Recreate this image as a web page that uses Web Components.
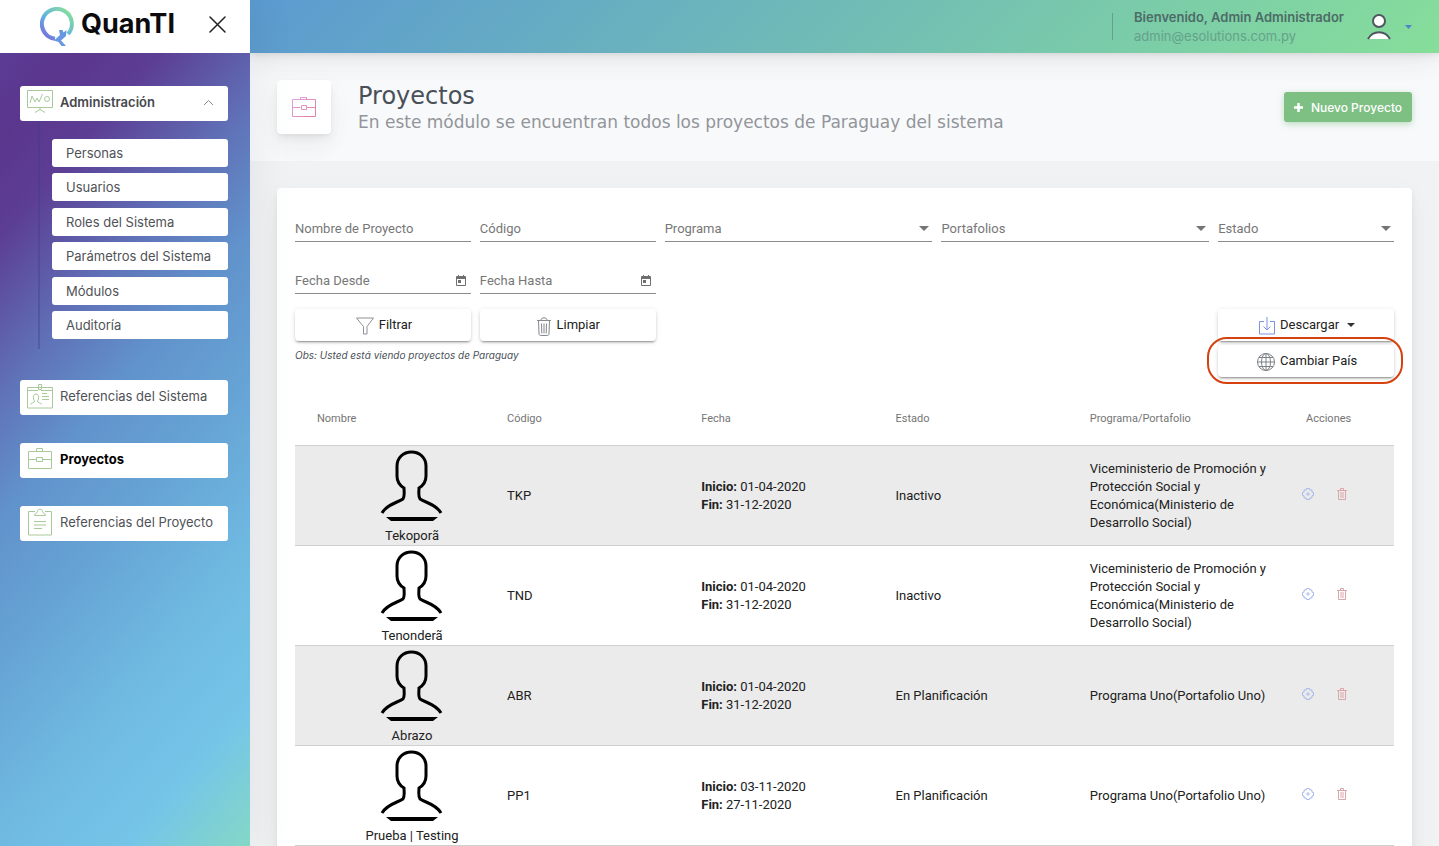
<!DOCTYPE html>
<html lang="es">
<head>
<meta charset="utf-8">
<meta name="viewport" content="width=device-width, initial-scale=1">
<title>QuanTI - Proyectos</title>
<style>
  html, body { margin: 0; height: 100%; }
  body { font-family: Inter, "Open Sans", sans-serif; font-size: 13px; color: #495057; background: #f1f2f4; overflow: hidden; }
</style>
</head>
<body>
<quanti-app></quanti-app>

<script>
const ICONS = {
  board: `<svg viewBox="0 0 26 24" width="26" height="24" fill="none" stroke="#a9c99a"><path d="M.5.5h25v17H.5zM13 18v2M8 22.500l5-3 5 3"/><path d="M3 13l2-7 3 6 2-4 2 4 3.500-8"/><circle cx="20" cy="9" r="2.500"/></svg>`,
  card: `<svg viewBox="0 0 26 25" width="26" height="25" fill="none" stroke="#a9c99a"><path d="M.5 3.500h25v20.500H.5zM.5 6.500h10.500M14 6.500h11.500M11.500.5h3v5h-3z"/><path d="M3.500 20.500c0-2 4-1 4-3.500-1.500-2-2-7 1.500-7s3 5 1.500 7c0 2.500 4 1.500 4 3.500M15 9.500h5M15 12.500h7M15 15.500h7"/></svg>`,
  case: `<svg viewBox="0 0 24 22" width="24" height="22" fill="none" stroke="#a9c99a"><path d="M.5 3.500h23v17H.5zM8.500 3.500v-3h6v3M.5 11.500h8M14.500 11.500h9M8.500 9.500h6v4h-6z"/></svg>`,
  clip: `<svg viewBox="0 0 24 28" width="24" height="28" fill="none" stroke="#a9c99a"><path d="M7 3.500H.5v23.500h23V3.500H17"/><path d="M6.500 7.500c0-3 2.500-1.500 3-4C9.500.5 14.500.5 14.500 3.500c.5 2.500 3 1 3 4zM6 13.500h12M6 17h12M6 20.500h8"/></svg>`,
  casePink: `<svg viewBox="0 0 24 22" width="24" height="22" fill="none" stroke="url(#g)"><defs><linearGradient id="g" x1="0" y1="0" x2="24" y2="22" gradientUnits="userSpaceOnUse"><stop stop-color="#dca2e8"/><stop offset="1" stop-color="#e47f95"/></linearGradient></defs><path d="M.5 3.500h23v17H.5zM8.500 3.500v-2h6v2M.5 11.500h8M14.500 11.500h9M9.500 9.500h5v4h-5z"/></svg>`,
  funnel: `<svg viewBox="0 0 18 18" width="18" height="18" fill="none" stroke="#8d9095"><path d="M.5 1h17l-6.500 8.500V17H7.500V9.500z"/></svg>`,
  trash: `<svg viewBox="0 0 14 19" width="14" height="19" fill="none" stroke="#85888c"><path d="M0 3.500h14M1.500 4l.5 13c0 1 1 1.500 2 1.500h6c1 0 2-.5 2-1.500l.5-13M4 3c0-3 6-3 6 0M4.500 6.500l.3 10M7 6.500v10M9.500 6.500l-.3 10"/></svg>`,
  download: `<svg viewBox="0 0 16 18" width="16" height="18" fill="none" stroke="#7b93e3"><path d="M5 4.500H.5V17h15V4.500H11M8 0v13M4.500 9.500L8 13l3.500-3.500"/></svg>`,
  globe: `<svg viewBox="0 0 18 18" width="18" height="18" fill="none" stroke="#7d8186"><circle cx="9" cy="9" r="8.500"/><ellipse cx="9" cy="9" rx="4.500" ry="8.500"/><path d="M9 .5v17M.5 9h17M2 4.500h14M2 13.500h14"/></svg>`,
  gear: `<svg viewBox="0 0 12 12" width="12" height="12" fill="none" stroke="#a9b9ea"><path d="M4.500.5h3l.3 1.500 2.200 0 0 2.200 1.500.3v3l-1.500.3 0 2.200-2.200 0-.3 1.500h-3l-.3-1.500-2.200 0 0-2.200-1.500-.3v-3l1.500-.3 0-2.200 2.200 0z"/><circle cx="6" cy="6" r="1.200"/></svg>`,
  bin: `<svg viewBox="0 0 10 12" width="10" height="12" fill="none" stroke="#dba5ac"><path d="M0 2.500h10M1.500 3v8.500h7V3M3.500 2V.5h3V2M4 4v6M6 4v6"/></svg>`,
  calendar: `<svg viewBox="0 0 10 12" width="10" height="12" fill="#6f6f6f" fill-rule="evenodd"><path d="M2 0h1v1h4V0h1v1h1a1 1 0 0 1 1 1v8a1 1 0 0 1-1 1H1a1 1 0 0 1-1-1V2a1 1 0 0 1 1-1h1zM1 4v6h8V4zM2 5h3v3H2z"/></svg>`,
  person: `<svg viewBox="0 0 64 72" width="64" height="72" fill="none" stroke="#000" stroke-width="3"><path d="M2 63C7 54 17 53 23 49c2-3 1-7 1-11-5-3-7-7-7-12V16C17 8 23 2 31.500 2S46 8 46 16v10c0 5-2 9-7 12 0 4-1 8 1 11 6 4 16 5 21 14"/><path fill="#000" stroke="none" d="M6 67h52l-5 4H11z"/></svg>`
};

/* Base class: clones the element's own template into an open shadow root. */
class View extends HTMLElement {
  constructor() {
    super();
    const t = document.createElement('template');
    t.innerHTML = `<style>*{box-sizing:border-box}button,input,select{font:inherit;color:inherit}svg{display:block;flex:none}</style>` + this.view();
    this.attachShadow({ mode: 'open' }).append(t.content.cloneNode(true));
  }
}

customElements.define('ui-icon', class extends HTMLElement {
  connectedCallback() {
    if (this.shadowRoot) return;
    this.attachShadow({ mode: 'open' }).innerHTML =
      `<style>:host{display:inline-flex;align-items:center;justify-content:center;flex:none}svg{display:block}</style>${ICONS[this.getAttribute('name')]}`;
  }
});

customElements.define('brand-bar', class extends View {
  view() { return `<style>
    :host{display:flex;align-items:center;height:53px;padding:0 24px 0 40px;background:#fff}
    a{display:flex;align-items:center;gap:7px;color:#0b0b0d;text-decoration:none;font-size:27px;line-height:32px;font-weight:700;flex:1}
    a span{padding-bottom:5px}
    button{border:0;background:none;padding:0 0 4px;cursor:pointer}
  </style>
  <a href="#"><svg viewBox="0 0 34 40" width="34" height="40" fill="none"><defs><linearGradient id="q" x1="4" y1="34" x2="30" y2="6" gradientUnits="userSpaceOnUse"><stop stop-color="#7a63dc"/><stop offset=".5" stop-color="#62b5de"/><stop offset="1" stop-color="#84dc9f"/></linearGradient></defs>
  <path stroke="url(#q)" stroke-width="4" d="M15 31.800A15 15 0 1 1 28 27"/><path fill="#6797e2" d="M14 33.500L20 28l-1-5h3.500l1 2.500 3-2.500-.5 6-5 4.500 5 5.500h-4.500l-3-4z"/></svg><span>QuanTI</span></a>
  <button aria-label="Cerrar menú"><svg width="17" height="17" viewBox="0 0 17 17" stroke="#222" stroke-width="1.500" stroke-linecap="round"><path d="M1 1l15 15M16 1L1 16"/></svg></button>`; }
});

customElements.define('side-link', class extends View {
  static observedAttributes = ['icon'];
  view() { return `<style>
    :host{display:block}
    a{display:flex;align-items:center;height:35px;padding:0 14px 3px 6px;gap:7px;border-radius:3px;background:#fff;color:#4f5256;text-decoration:none;line-height:18px}
    .i{width:27px;display:flex;justify-content:center}
    .t{flex:1;white-space:nowrap}
    :host([open]) a{font-weight:600;color:#45484d}
    :host([current]) a{font-weight:700;color:#000}
    .c{display:none;fill:none;stroke:#888}
    :host([open]) .c{display:block}
    :host([sub]) a{height:28px;padding:0 14px}
    :host([sub]) .i{display:none}
  </style><a href="#"><span class="i"></span><span class="t"><slot></slot></span><svg class="c" width="11" height="7" viewBox="0 0 11 7"><path d="M1 6l4.500-4.500L10 6"/></svg></a>`; }
  attributeChangedCallback(n, o, v) { this.shadowRoot.querySelector('.i').innerHTML = ICONS[v]; }
});

customElements.define('side-menu', class extends View {
  view() { return `<style>
    :host{display:flex;flex-direction:column;width:250px;flex:none;box-shadow:7px 0 40px rgba(8,10,37,.06);z-index:2}
    nav{flex:1;padding:33px 22px 0 20px;display:flex;flex-direction:column;gap:28px;
      background:linear-gradient(131deg,#5b3c96 0,#5b368d 8%,#5c3e94 17%,#6073b8 32%,#6192cb 43%,#66a4d5 57%,#6fb9e1 72%,#75c5e8 87%,#84d8c6 100%)}
    .sub{margin:0 0 3px 18px;height:228px;border-left:2px solid rgba(60,60,130,.35);padding:18px 0 10px 12px;display:flex;flex-direction:column;justify-content:space-between}
  </style>
  <brand-bar></brand-bar>
  <nav aria-label="Principal">
    <div><side-link icon="board" open>Administración</side-link>
      <div class="sub">
        <side-link sub>Personas</side-link><side-link sub>Usuarios</side-link><side-link sub>Roles del Sistema</side-link>
        <side-link sub>Parámetros del Sistema</side-link><side-link sub>Módulos</side-link><side-link sub>Auditoría</side-link>
      </div></div>
    <side-link icon="card">Referencias del Sistema</side-link>
    <side-link icon="case" current>Proyectos</side-link>
    <side-link icon="clip">Referencias del Proyecto</side-link>
  </nav>`; }
});

customElements.define('top-bar', class extends View {
  view() { return `<style>
    :host{display:flex;align-items:center;justify-content:flex-end;height:53px;flex:none;padding-right:27px;background:linear-gradient(135deg,#5b9ad1,#86de9a);
      box-shadow:0 7px 35px rgba(4,9,20,.03),0 15px 22px rgba(4,9,20,.03),0 4px 8px rgba(4,9,20,.05),0 2px 3px rgba(4,9,20,.03);z-index:1}
    .who{border-left:1px solid #62a08f;padding-left:21px;height:27px;display:flex;flex-direction:column;justify-content:center;line-height:19px;margin-right:23px}
    b{color:#4d6b67;font-weight:600}
    span{color:#66a18b}
    button{border:0;background:none;padding:0;display:flex;align-items:center;gap:14px}
  </style>
  <div class="who"><b>Bienvenido, Admin Administrador</b><span>admin@esolutions.com.py</span></div>
  <button aria-label="Cuenta"><svg width="24" height="26" viewBox="0 0 24 26" fill="#fff" stroke="#4f5660" stroke-width="2"><circle cx="12" cy="7" r="6"/><path stroke="none" d="M1 25C6 16 18 16 23 25z"/><path fill="none" d="M1 25C6 16 18 16 23 25"/></svg>
  <svg width="7" height="4" viewBox="0 0 7 4"><path fill="#4f83cc" d="M0 0h7L3.500 4z"/></svg></button>`; }
});

customElements.define('page-title', class extends View {
  view() { return `<style>
    :host{display:flex;align-items:flex-start;height:108px;padding:27px 27px 0;background:#f8f9fb}
    .tile{width:54px;height:54px;border-radius:4px;background:#fff;display:flex;align-items:center;justify-content:center;margin-right:27px;flex:none;
      box-shadow:0 7px 35px rgba(4,9,20,.03),0 15px 22px rgba(4,9,20,.03),0 4px 8px rgba(4,9,20,.05),0 2px 3px rgba(4,9,20,.03)}
    .t{flex:1;min-width:0;font-family:"DejaVu Sans",sans-serif}
    h1{margin:3px 0 0;font-size:24px;line-height:26px;font-weight:400;color:#495057}
    p{margin:3px 0 0;font-size:17px;line-height:20px;color:#929599}
    button{display:flex;align-items:center;justify-content:center;gap:8px;margin-top:12px;width:128px;height:30px;border:0;border-radius:3px;background:#7ec083;color:#fff;font-size:12px;font-weight:500;padding:0;box-shadow:0 2px 6px rgba(126,192,131,.5);white-space:nowrap}
  </style>
  <div class="tile"><ui-icon name="casePink"></ui-icon></div>
  <div class="t"><h1><slot name="title"></slot></h1><p><slot></slot></p></div>
  <button><svg width="9" height="9" viewBox="0 0 9 9" stroke="#fff" stroke-width="2.500"><path d="M4.500 0v9M0 4.500h9"/></svg>Nuevo Proyecto</button>`; }
});

customElements.define('form-field', class extends HTMLElement {
  connectedCallback() {
    if (this.shadowRoot) return;
    const kind = this.getAttribute('kind'), label = this.getAttribute('label');
    this.attachShadow({ mode: 'open' }).innerHTML = `<style>
      :host{display:flex;align-items:center;height:26px;border-bottom:1px solid #8c8c8c;min-width:0;font-family:Roboto,sans-serif;color:#777}
      .box{flex:1;min-width:0;display:grid;align-items:center}
      label,input,select{grid-area:1/1;font:13px/18px Roboto,sans-serif;color:inherit}
      label{pointer-events:none;z-index:1}
      input,select{appearance:none;width:100%;min-width:0;height:25px;border:0;padding:0;margin:0;background:none;outline:0}
      svg{display:block}
      .a{margin-right:3px;fill:#757575;pointer-events:none}
      button{border:0;background:none;padding:0;margin-right:5px}
    </style><div class="box"><label for="f">${label}</label>${
      kind === 'select' ? `<select id="f"><option value=""></option></select>` : `<input id="f" type="text">`}</div>${
      kind === 'select' ? `<svg class="a" width="10" height="5" viewBox="0 0 10 5"><path d="M0 0h10L5 5z"/></svg>` : ''}${
      kind === 'date' ? `<button aria-label="Abrir calendario">${ICONS.calendar}</button>` : ''}`;
  }
});

customElements.define('raised-button', class extends View {
  view() { return `<style>
    :host{display:block;position:relative}
    button{width:100%;height:32px;border:0;border-radius:4px;background:#fff;padding:0 0 0 2px;display:flex;align-items:center;justify-content:center;gap:5px;
      font:13px/18px Roboto,sans-serif;color:#212121;box-shadow:0 3px 1px -2px rgba(0,0,0,.2),0 2px 2px rgba(0,0,0,.14),0 1px 5px rgba(0,0,0,.12)}
    :host([marked])::after{content:"";position:absolute;inset:-8px -9px -7px -11px;border:2px solid #d5420f;border-radius:20px;pointer-events:none;z-index:2}
  </style><button><slot name="icon"></slot><slot></slot></button>`; }
});

customElements.define('project-filters', class extends View {
  view() { return `<style>
    :host{display:block}
    .g{display:grid;grid-template-columns:44fr 44fr 67fr 67fr 44fr;column-gap:9px;row-gap:26px;align-items:start}
    .b{margin-top:15px;row-gap:4px}
    .end{grid-column:5}
    .obs{grid-column:1/4;font:italic 10px/20px Inter,sans-serif;color:#495057;margin:0}
    svg{margin-left:3px}
    ui-icon{margin-top:2px}
  </style>
  <div class="g">
    <form-field label="Nombre de Proyecto"></form-field><form-field label="Código"></form-field>
    <form-field kind="select" label="Programa"></form-field><form-field kind="select" label="Portafolios"></form-field>
    <form-field kind="select" label="Estado"></form-field>
    <form-field kind="date" label="Fecha Desde"></form-field><form-field kind="date" label="Fecha Hasta"></form-field>
  </div>
  <div class="g b">
    <raised-button><ui-icon slot="icon" name="funnel"></ui-icon>Filtrar</raised-button>
    <raised-button><ui-icon slot="icon" name="trash"></ui-icon>Limpiar</raised-button>
    <raised-button class="end"><ui-icon slot="icon" name="download"></ui-icon>Descargar <svg width="8" height="4" viewBox="0 0 8 4"><path fill="#333" d="M0 0h8L4 4z"/></svg></raised-button>
    <p class="obs">Obs: Usted está viendo proyectos de Paraguay</p>
    <raised-button class="end" marked><ui-icon slot="icon" name="globe"></ui-icon>Cambiar País</raised-button>
  </div>`; }
});

const PROJECTS = [
  ['Tekoporã', 'TKP', '01-04-2020', '31-12-2020', 'Inactivo', 'Viceministerio de Promoción y Protección Social y Económica(Ministerio de Desarrollo Social)'],
  ['Tenonderã', 'TND', '01-04-2020', '31-12-2020', 'Inactivo', 'Viceministerio de Promoción y Protección Social y Económica(Ministerio de Desarrollo Social)'],
  ['Abrazo', 'ABR', '01-04-2020', '31-12-2020', 'En Planificación', 'Programa Uno(Portafolio Uno)'],
  ['Prueba | Testing', 'PP1', '03-11-2020', '27-11-2020', 'En Planificación', 'Programa Uno(Portafolio Uno)']
];

customElements.define('project-table', class extends View {
  view() { return `<style>
    :host{display:block;margin-top:16px}
    table{width:100%;table-layout:fixed;border-collapse:separate;border-spacing:0;font:13px/18px Roboto,sans-serif;color:#212121}
    .n{width:212px}.x{width:110px}
    th,td{padding:0 14px 0 0;text-align:left;border-bottom:1px solid #d0d0d0}
    th{height:53px;font-size:11px;font-weight:400;color:#757575}
    th:first-child{padding-left:22px}
    th:last-child{padding-left:22px}
    td:first-child{padding:4px 0 0 22px;text-align:center}
    td:first-child svg{margin:0 auto 5px}
    tbody tr:nth-child(odd){background:#ebebeb}
    b{font-weight:700}
    td:last-child{padding:0 0 4px 18px}
    .a{display:flex;gap:23px}
    button{border:0;background:none;padding:0}
  </style>
  <table><colgroup><col class="n"><col><col><col><col><col class="x"></colgroup>
  <thead><tr><th>Nombre</th><th>Código</th><th>Fecha</th><th>Estado</th><th>Programa/Portafolio</th><th>Acciones</th></tr></thead>
  <tbody>${PROJECTS.map(p => `<tr><td>${ICONS.person}${p[0]}</td><td>${p[1]}</td><td><b>Inicio:</b> ${p[2]}<br><b>Fin:</b> ${p[3]}</td><td>${p[4]}</td><td>${p[5]}</td>
  <td><div class="a"><button aria-label="Configurar">${ICONS.gear}</button><button aria-label="Eliminar">${ICONS.bin}</button></div></td></tr>`).join('')}</tbody></table>`; }
});

customElements.define('content-card', class extends View {
  view() { return `<style>:host{display:block;margin:27px;padding:28px 18px 18px;background:#fff;border-radius:4px;
    box-shadow:0 7px 35px rgba(4,9,20,.03),0 15px 22px rgba(4,9,20,.03),0 4px 8px rgba(4,9,20,.05),0 2px 3px rgba(4,9,20,.03)}</style><slot></slot>`; }
});

customElements.define('quanti-app', class extends View {
  view() { return `<style>
    :host{display:flex;height:100vh}
    .r{flex:1;min-width:0;display:flex;flex-direction:column}
    main{flex:1;min-height:0;overflow:hidden auto;scrollbar-width:none}
  </style>
  <side-menu></side-menu>
  <div class="r"><top-bar></top-bar>
  <main>
    <page-title><span slot="title">Proyectos</span>En este módulo se encuentran todos los proyectos de Paraguay del sistema</page-title>
    <content-card><project-filters></project-filters><project-table></project-table></content-card>
  </main></div>`; }
});
</script>
</body>
</html>
